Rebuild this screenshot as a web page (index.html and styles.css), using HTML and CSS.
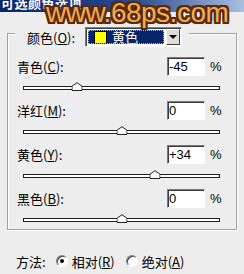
FILE: index.html
```html
<!DOCTYPE html>
<html lang="zh">

<head>
    <meta charset="UTF-8">
    <title>可选颜色选项</title>
    <link rel="stylesheet" href="styles.css">
</head>

<body>
    <div class="titlebar">
        <span class="title-text">可选颜色选项</span>
    </div>

    <div class="watermark">www.68ps.com</div>

    <div class="dialog">
        <div class="group">
            <div class="group-head">
                <label class="head-label">颜色(<u>O</u>):</label>
                <div class="combo">
                    <div class="combo-value">
                        <span class="swatch"></span>
                        <span class="combo-text">黄色</span>
                    </div>
                    <div class="combo-btn"><span class="arrow"></span></div>
                </div>
            </div>

            <div class="rows">
                <div class="row">
                    <div class="field">
                        <label class="field-label">青色(<u>C</u>):</label>
                        <input type="text" class="num" value="-45">
                        <span class="pct">%</span>
                    </div>
                    <div class="slider">
                        <div class="track"></div>
                        <svg class="thumb" style="left: 27.5%" width="11" height="9" viewBox="0 0 11 9"><path d="M0.5 8.5V4.2L5.5 0.7L10.5 4.2V8.5Z" fill="#fff" stroke="#222"/></svg>
                    </div>
                </div>

                <div class="row">
                    <div class="field">
                        <label class="field-label">洋红(<u>M</u>):</label>
                        <input type="text" class="num" value="0">
                        <span class="pct">%</span>
                    </div>
                    <div class="slider">
                        <div class="track"></div>
                        <svg class="thumb" style="left: 50%" width="11" height="9" viewBox="0 0 11 9"><path d="M0.5 8.5V4.2L5.5 0.7L10.5 4.2V8.5Z" fill="#fff" stroke="#222"/></svg>
                    </div>
                </div>

                <div class="row">
                    <div class="field">
                        <label class="field-label">黄色(<u>Y</u>):</label>
                        <input type="text" class="num" value="+34">
                        <span class="pct">%</span>
                    </div>
                    <div class="slider">
                        <div class="track"></div>
                        <svg class="thumb" style="left: 67%" width="11" height="9" viewBox="0 0 11 9"><path d="M0.5 8.5V4.2L5.5 0.7L10.5 4.2V8.5Z" fill="#fff" stroke="#222"/></svg>
                    </div>
                </div>

                <div class="row">
                    <div class="field">
                        <label class="field-label">黑色(<u>B</u>):</label>
                        <input type="text" class="num" value="0">
                        <span class="pct">%</span>
                    </div>
                    <div class="slider">
                        <div class="track"></div>
                        <svg class="thumb" style="left: 50%" width="11" height="9" viewBox="0 0 11 9"><path d="M0.5 8.5V4.2L5.5 0.7L10.5 4.2V8.5Z" fill="#fff" stroke="#222"/></svg>
                    </div>
                </div>
            </div>
        </div>

        <div class="method">
            <span class="method-label">方法:</span>
            <span class="radio checked"></span>
            <span class="radio-label">相对(<u>R</u>)</span>
            <span class="radio"></span>
            <span class="radio-label">绝对(<u>A</u>)</span>
        </div>
    </div>
</body>

</html>
```

FILE: styles.css
```css
body {
    margin: 0;
    width: 244px;
    height: 274px;
    overflow: hidden;
    background-color: #ededed;
    font-family: "Noto Sans CJK SC", "Liberation Sans", sans-serif;
    font-size: 13px;
    color: #000;
    position: relative;
}

u {
    text-decoration: underline;
    text-underline-offset: 1px;
}

/* title bar, cut off at the top */
.titlebar {
    height: 12px;
    overflow: hidden;
    background: linear-gradient(to right, #0a246a 0%, #2a4a8e 55%, #a9bfe0 100%);
}

.title-text {
    display: block;
    margin-top: -6px;
    padding-left: 1px;
    line-height: 17px;
    font-size: 13px;
    font-weight: bold;
    color: #fff;
    letter-spacing: 0.5px;
}

.watermark {
    position: absolute;
    left: 46px;
    top: -1px;
    font-family: "Liberation Sans", Arial, sans-serif;
    font-size: 28px;
    line-height: 28px;
    letter-spacing: -0.5px;
    color: #f3aa55;
    text-shadow:
        2px 0 0 #5a2a0a, -2px 0 0 #5a2a0a, 0 2px 0 #5a2a0a, 0 -2px 0 #5a2a0a,
        2px 2px 0 #5a2a0a, -2px -2px 0 #5a2a0a, 2px -2px 0 #5a2a0a, -2px 2px 0 #5a2a0a,
        0 0 3px #5a2a0a;
    z-index: 5;
}

.dialog {
    padding-top: 21px;
}

/* etched group box */
.group {
    margin-left: 7px;
    width: 230px;
    box-sizing: border-box;
    height: 197px;
    border: 1px solid #a0a0a0;
    box-shadow: inset 1px 1px 0 #fff, 1px 1px 0 #fff;
    padding: 0 12px 0 9px;
}

.group-head {
    display: flex;
    align-items: center;
    width: fit-content;
    margin: -7px 0 0 -2px;
    padding: 0 7px 0 12px;
    background-color: #ededed;
    height: 20px;
}

.head-label {
    margin-right: 10px;
    white-space: nowrap;
}

.combo {
    width: 97px;
    height: 20px;
    box-sizing: border-box;
    display: flex;
    padding: 1px;
    border: 1px solid;
    border-color: #808080 #fff #fff #808080;
    box-shadow: inset 1px 1px 0 #404040;
    background-color: #fff;
}

.combo-value {
    flex: 1;
    display: flex;
    align-items: center;
    margin: 1px 2px 1px 1px;
    background-color: #0a246a;
    outline: 1px dotted #b8b8b8;
    outline-offset: -1px;
}

.swatch {
    width: 11px;
    height: 11px;
    margin-left: 6px;
    background-color: #ffff00;
    border: 1px solid #000;
}

.combo-text {
    margin-left: 5px;
    color: #fff;
    line-height: 14px;
}

.combo-btn {
    width: 14px;
    height: 16px;
    box-sizing: border-box;
    background-color: #e0ddd6;
    border: 1px solid;
    border-color: #fff #404040 #404040 #fff;
    display: flex;
    align-items: center;
    justify-content: center;
}

.arrow {
    width: 0;
    height: 0;
    border-left: 4px solid transparent;
    border-right: 4px solid transparent;
    border-top: 4px solid #000;
}

.rows {
    margin-top: 10px;
    display: flex;
    flex-direction: column;
    gap: 11px;
}

.field {
    display: flex;
    align-items: center;
    height: 19px;
}

.field-label {
    flex: 1;
    white-space: nowrap;
}

.num {
    width: 38px;
    height: 19px;
    box-sizing: border-box;
    margin: 0;
    padding: 0 0 0 1px;
    border: 1px solid;
    border-color: #7a7a7a #fff #fff #7a7a7a;
    box-shadow: inset 1px 1px 0 #3c3c3c;
    background-color: #fff;
    font-family: "Liberation Sans", Arial, sans-serif;
    font-size: 13px;
    color: #000;
    outline: none;
}

.pct {
    width: 14px;
    margin-left: 5px;
    font-family: "Liberation Sans", Arial, sans-serif;
    font-size: 13px;
}

.slider {
    position: relative;
    height: 8px;
    margin: 6px 4px 0 6px;
}

.track {
    position: absolute;
    left: 0;
    right: 0;
    bottom: 0;
    height: 2px;
    border: 1px solid #1e1e1e;
    background-color: #fff;
}

.thumb {
    position: absolute;
    bottom: -1px;
    transform: translateX(-50%);
}

.method {
    display: flex;
    align-items: center;
    margin-top: 23px;
    padding-left: 16px;
    height: 16px;
}

.method-label {
    margin-right: 10px;
}

.radio {
    width: 12px;
    height: 12px;
    box-sizing: border-box;
    border-radius: 50%;
    border: 1px solid;
    border-color: #808080 #fff #fff #808080;
    box-shadow: inset 1px 1px 0 #404040;
    background-color: #fff;
    display: flex;
    align-items: center;
    justify-content: center;
}

.radio.checked::after {
    content: "";
    width: 4px;
    height: 4px;
    border-radius: 50%;
    background-color: #000;
}

.radio-label {
    margin: 0 11px 0 4px;
}
```
